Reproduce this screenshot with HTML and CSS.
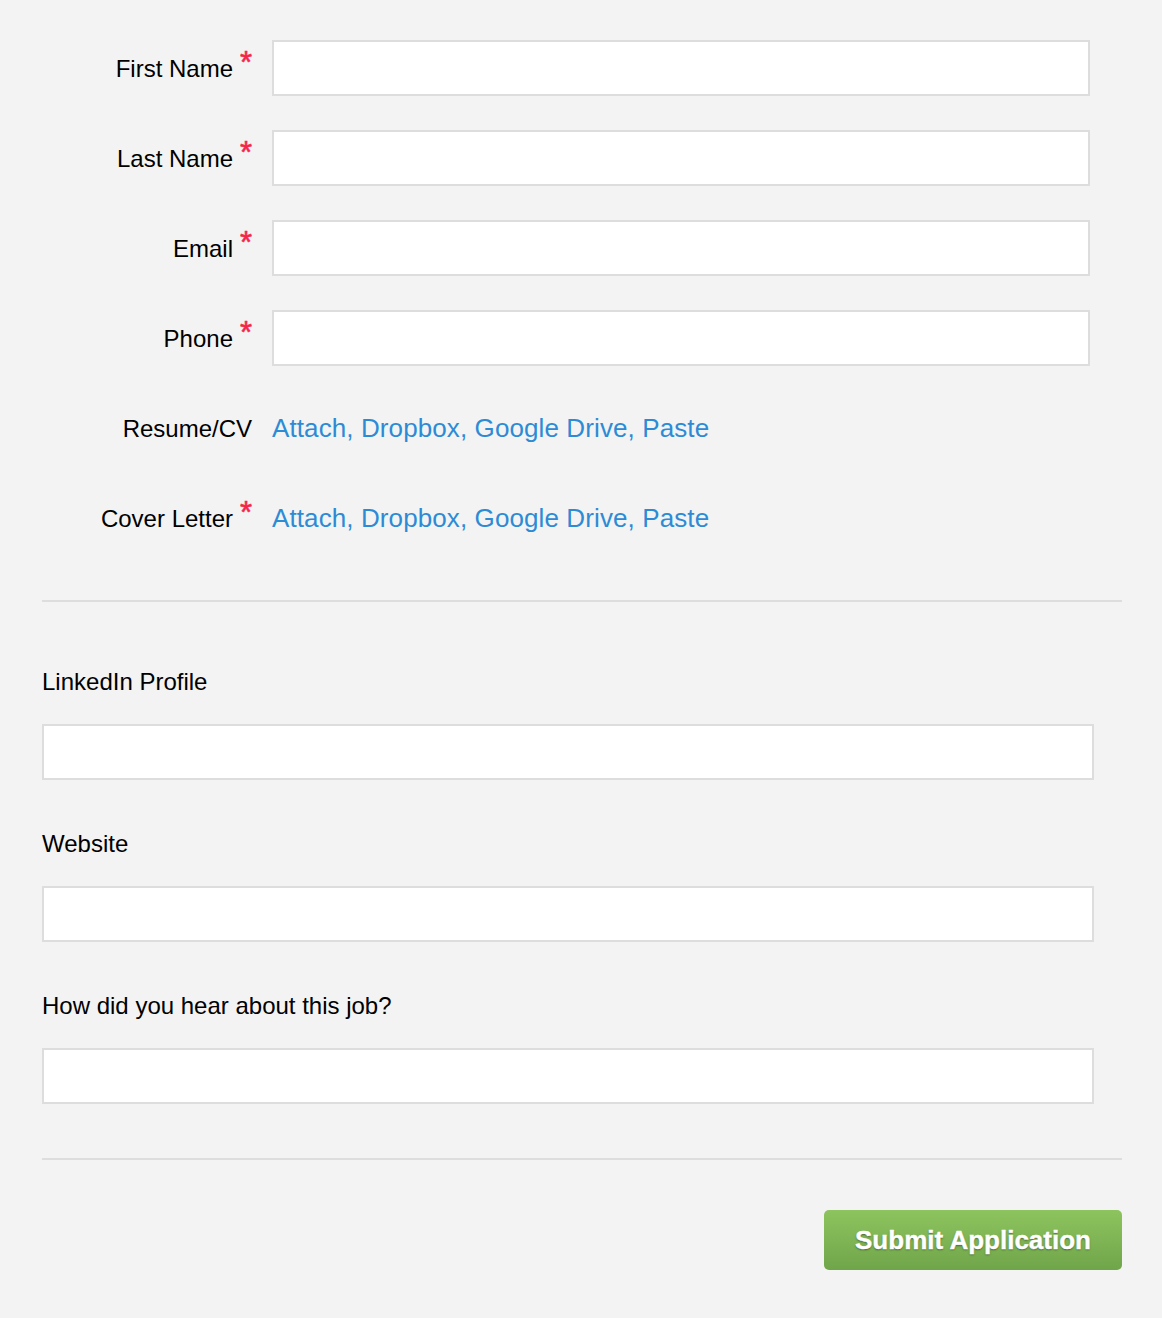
FILE: index.html
```html
<!DOCTYPE html>
<html>
<head>
<meta charset="utf-8">
<link rel="stylesheet" href="styles.css">
</head>
<body>
<form class="app-form">
  <div class="main-fields">
    <div class="row">
      <label class="row-label">First Name<span class="req">*</span></label>
      <input class="text-input short" type="text">
    </div>
    <div class="row">
      <label class="row-label">Last Name<span class="req">*</span></label>
      <input class="text-input short" type="text">
    </div>
    <div class="row">
      <label class="row-label">Email<span class="req">*</span></label>
      <input class="text-input short" type="text">
    </div>
    <div class="row">
      <label class="row-label">Phone<span class="req">*</span></label>
      <input class="text-input short" type="text">
    </div>
    <div class="row">
      <label class="row-label">Resume/CV</label>
      <div class="links"><a href="#">Attach</a>, <a href="#">Dropbox</a>, <a href="#">Google Drive</a>, <a href="#">Paste</a></div>
    </div>
    <div class="row">
      <label class="row-label">Cover Letter<span class="req">*</span></label>
      <div class="links"><a href="#">Attach</a>, <a href="#">Dropbox</a>, <a href="#">Google Drive</a>, <a href="#">Paste</a></div>
    </div>
  </div>
  <hr class="divider first">
  <div class="extra-fields">
    <div class="field">
      <label class="field-label">LinkedIn Profile</label>
      <input class="text-input wide" type="text">
    </div>
    <div class="field">
      <label class="field-label">Website</label>
      <input class="text-input wide" type="text">
    </div>
    <div class="field">
      <label class="field-label">How did you hear about this job?</label>
      <input class="text-input wide" type="text">
    </div>
  </div>
  <hr class="divider second">
  <div class="actions">
    <button type="button" class="submit">Submit Application</button>
  </div>
</form>
</body>
</html>
```
FILE: styles.css
```css
html, body {
  margin: 0;
  padding: 0;
  background: #f3f3f3;
}
body {
  font-family: "Liberation Sans", Arial, Helvetica, sans-serif;
  font-size: 24px;
  color: #000;
}
.app-form {
  width: 1080px;
  padding: 40px 0 48px 42px;
}
.main-fields {
  display: flex;
  flex-direction: column;
  gap: 34px;
}
.row {
  display: flex;
  align-items: center;
  height: 56px;
}
.row-label {
  width: 210px;
  margin-right: 20px;
  padding-top: 2px;
  text-align: right;
  white-space: nowrap;
  line-height: 56px;
}
.req {
  display: inline-block;
  width: 19px;
  text-align: right;
  color: #f5254a;
  font-size: 31px;
  line-height: 20px;
  vertical-align: 4px;
  -webkit-text-stroke: 0.6px #f5254a;
}
.text-input {
  box-sizing: border-box;
  height: 56px;
  border: 2px solid #dddddd;
  background: #fff;
  margin: 0;
  padding: 0 10px;
  font-size: 22px;
  font-family: inherit;
  outline: none;
  border-radius: 0;
}
.text-input.short {
  width: 818px;
}
.text-input.wide {
  width: 1052px;
  display: block;
}
.links {
  font-size: 26px;
  color: #2d8bd6;
  letter-spacing: 0.1px;
}
.links a {
  color: #2d8bd6;
  text-decoration: none;
}
.divider {
  border: 0;
  height: 2px;
  background: #dddddd;
  margin: 0;
}
.divider.first {
  margin-top: 54px;
}
.extra-fields {
  display: flex;
  flex-direction: column;
  gap: 52px;
  padding-top: 68px;
}
.field-label {
  display: block;
  line-height: 24px;
  margin-bottom: 30px;
}
.divider.second {
  margin-top: 54px;
}
.actions {
  display: flex;
  justify-content: flex-end;
  padding-top: 50px;
}
.submit {
  width: 298px;
  height: 60px;
  border: 0;
  border-radius: 5px;
  background: linear-gradient(to bottom, #8dc45e 0%, #70a54a 100%);
  color: #fff;
  font-family: "Liberation Sans", Arial, Helvetica, sans-serif;
  font-weight: bold;
  font-size: 26px;
  -webkit-text-stroke: 0.4px #fff;
  text-shadow: 0 1px 2px rgba(0, 0, 0, 0.45);
  cursor: pointer;
  padding: 0;
}
```
